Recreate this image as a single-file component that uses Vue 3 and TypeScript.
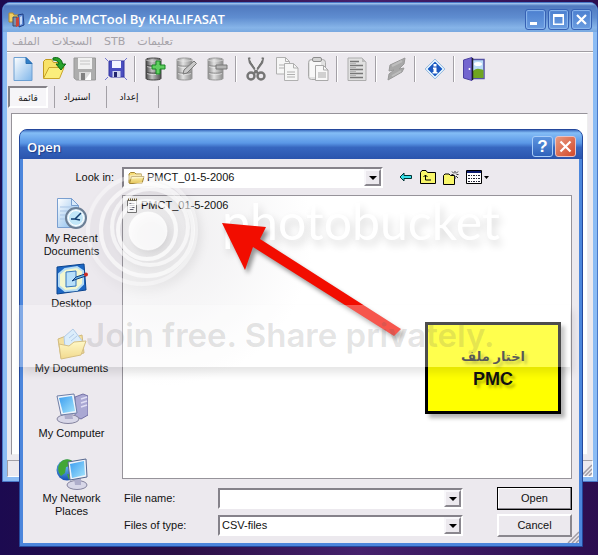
<script setup lang="ts">
import { ref } from 'vue'

const menus: string[] = ['الملف', 'السجلات', 'STB', 'تعليمات']
const tabs: string[] = ['قائمة', 'استيراد', 'إعداد']
const activeTab = ref(0)

const toolGroups: string[][] = [
  ['new', 'open', 'save', 'saveall'],
  ['dbadd', 'dbedit', 'dbremove'],
  ['cut', 'copy', 'paste'],
  ['list'],
  ['flash'],
  ['info'],
  ['exit'],
]

const places = [
  { id: 'recent', label: 'My Recent Documents' },
  { id: 'desktop', label: 'Desktop' },
  { id: 'documents', label: 'My Documents' },
  { id: 'computer', label: 'My Computer' },
  { id: 'network', label: 'My Network Places' },
]

const folder = ref('PMCT_01-5-2006')
const fileName = ref('')
const fileType = ref('CSV-files')
</script>

<template>
  <main class="screen">
    <svg width="0" height="0" class="defs" aria-hidden="true">
      <defs>
        <linearGradient id="g-page" x1="0" y1="0" x2="1" y2="1">
          <stop offset="0" stop-color="#ffffff" />
          <stop offset="1" stop-color="#7fb6ea" />
        </linearGradient>
        <linearGradient id="g-metal" x1="0" x2="1" y1="0" y2="0">
          <stop offset="0" stop-color="#8a8a8a" />
          <stop offset="0.4" stop-color="#e2e2e2" />
          <stop offset="1" stop-color="#8c8c8c" />
        </linearGradient>
        <linearGradient id="g-dark" x1="0" x2="1" y1="0" y2="0">
          <stop offset="0" stop-color="#444" />
          <stop offset="0.4" stop-color="#c4c4c4" />
          <stop offset="1" stop-color="#505050" />
        </linearGradient>
        <linearGradient id="g-screen" x1="0" y1="0" x2="1" y2="1">
          <stop offset="0" stop-color="#3a9df0" />
          <stop offset="1" stop-color="#a5e4fb" />
        </linearGradient>
        <linearGradient id="g-folder" x1="0" y1="0" x2="0" y2="1">
          <stop offset="0" stop-color="#fff6b0" />
          <stop offset="1" stop-color="#ecc95c" />
        </linearGradient>
        <radialGradient id="g-globe" cx="0.4" cy="0.3" r="0.8">
          <stop offset="0" stop-color="#6fc0f5" />
          <stop offset="1" stop-color="#0a3fa8" />
        </radialGradient>
      </defs>
    </svg>

    <section class="window app-window">
      <header class="app-title">
        <svg class="app-icon" viewBox="0 0 17 17" aria-hidden="true">
          <path d="M1 2h4l1 2h6v7H1z" fill="#f0cf62" stroke="#b08a30" />
          <path d="M5 6h4v9H5z" fill="#7d8da8" stroke="#36486c" />
          <path d="M10 4l5-1 1 11-5 2z" fill="#5f8bd6" stroke="#1f3f86" />
          <path d="M8 7l3-1v9l-3 1z" fill="#c8443a" />
          <path d="M12 6l2-1v8l-2 1z" fill="#c5d8f5" />
        </svg>
        <h1>Arabic PMCTool By KHALIFASAT</h1>
        <div class="caption-buttons">
          <button type="button" class="cap blue" aria-label="Minimize">
            <svg viewBox="0 0 19 19"><path d="M4 12h7v3H4z" fill="#fff" /></svg>
          </button>
          <button type="button" class="cap blue" aria-label="Maximize">
            <svg viewBox="0 0 19 19"><path d="M4 4h11v11H4zM5.500 7v6.500h8V7z" fill="#fff" fill-rule="evenodd" /></svg>
          </button>
          <button type="button" class="cap blue" aria-label="Close window">
            <svg viewBox="0 0 19 19"><path d="M5 5l9 9M14 5l-9 9" stroke="#fff" stroke-width="2.200" /></svg>
          </button>
        </div>
      </header>

      <div class="app-body">
        <nav class="menu">
          <button v-for="m in menus" :key="m" type="button" disabled>{{ m }}</button>
        </nav>

        <div class="toolbar" role="toolbar">
          <div v-for="(group, g) in toolGroups" :key="g" class="tool-group">
            <button v-for="t in group" :key="t" type="button" class="tool" :aria-label="t">
              <svg viewBox="0 0 24 24" aria-hidden="true">
                <g v-if="t === 'new'">
                  <path d="M3 .5h12l6 6v17H3z" fill="url(#g-page)" stroke="#6c9fd2" />
                  <path d="M15 .5v6h6z" fill="#2f7fc8" stroke="#2a6fb2" />
                </g>
                <g v-else-if="t === 'open'">
                  <path d="M1.500 21V4.500l2-2h6l2 3h6V11" fill="#f8e268" stroke="#c09a20" />
                  <path d="M1.500 21.500L7 10.500h15l-4.500 11z" fill="#fbee7c" stroke="#c9a42a" />
                  <path d="M11 1c5-1.500 9 1 9.500 6h3.200L19 13l-5-6h3C16.500 4 14 3 11 3z" fill="#27a32b" stroke="#0d6614" />
                </g>
                <g v-else-if="t === 'save'">
                  <path d="M1 1h21.500v22H3.500L1 21z" fill="#adadad" stroke="#999" />
                  <path d="M5 1h14v11H5z" fill="#f1f1f1" />
                  <path d="M7 4h10M7 7h10" stroke="#c4c4c4" />
                  <path d="M6 15h12v8H6z" fill="#dadada" />
                  <path d="M8 16h4v7H8z" fill="#808080" />
                  <path d="M12 23l6-8v8z" fill="#fff" />
                </g>
                <g v-else-if="t === 'saveall'">
                  <path d="M5 4h15v16H6.500L5 18.500z" fill="#4a4ec0" stroke="#3235a0" />
                  <path d="M8 4h9v7H8z" fill="#f3f5ff" />
                  <path d="M8.500 14h8v6h-8z" fill="#cfd4ef" />
                  <path d="M10 15h3v5h-3z" fill="#22246e" />
                  <path d="M1 1l3 3M23 1l-3 3M1 23l3-3M23 23l-3-3" stroke="#7377d0" />
                </g>
                <g v-else-if="t === 'dbadd' || t === 'dbedit' || t === 'dbremove'">
                  <path
                    d="M3 2.500c0-2 15-2 15 0v19c0 2-15 2-15 0z"
                    :fill="t === 'dbadd' ? 'url(#g-dark)' : 'url(#g-metal)'"
                    :stroke="t === 'dbadd' ? '#444' : '#999'"
                  />
                  <path d="M3 8c3 1.500 12 1.500 15 0M3 15c3 1.500 12 1.500 15 0" fill="none" :stroke="t === 'dbadd' ? '#444' : '#8c8c8c'" />
                  <path d="M3 3c3 1.500 12 1.500 15 0M4 9.500c3 1.500 10 1.500 13 0M4 16.500c3 1.500 10 1.500 13 0" fill="none" stroke="#eee" stroke-opacity=".6" />
                  <path v-if="t === 'dbadd'" d="M13 4h4v4h5v4h-5v5h-4v-5H9V8h4z" fill="#5fcf5f" stroke="#188524" />
                  <path v-else-if="t === 'dbedit'" d="M9 17l1-4 10-9 2.500 2.500L13 16z" fill="#c9c9c9" stroke="#777" />
                  <path v-else d="M11 8h11v4H11z" fill="#b5b5b5" stroke="#777" />
                </g>
                <g v-else-if="t === 'cut'" fill="none" stroke="#757575">
                  <path d="M5 .5l1 5 8 11M19 .5l-1 5-8 11" stroke-width="2.400" />
                  <path d="M6 2l7 11M18 2l-7 11" stroke="#eee" />
                  <ellipse cx="7" cy="19" rx="3.500" ry="3.500" stroke-width="2.400" />
                  <ellipse cx="17" cy="19" rx="3.500" ry="3.500" stroke-width="2.400" />
                </g>
                <g v-else-if="t === 'copy'" fill="#f6f6f6" stroke="#b0b0b0">
                  <path d="M1.500.5h9l4 4V17h-13z" />
                  <path d="M10.500.5v4h4M4 8h6M4 11h6" fill="none" />
                  <path d="M9.500 6.500h9l4.500 4.500v12.500H9.500z" />
                  <path d="M18.500 6.500V11H23M12 15h8M12 17.500h8M12 20h8" fill="none" />
                </g>
                <g v-else-if="t === 'paste'" stroke="#a9a9a9">
                  <rect x="2.500" y="2.500" width="17" height="20" rx="3" fill="#e2e2e2" />
                  <rect x="4" y="4" width="11" height="16" fill="#f8f8f8" stroke="none" />
                  <rect x="6.500" y=".5" width="9" height="4" rx="1.500" fill="#d4d4d4" stroke="#8d8d8d" />
                  <path d="M9.500 8.500h8l4.500 4.500v10.500H9.500z" fill="#f8f8f8" />
                  <path d="M17.500 8.500V13H22M12 16h8M12 18h8M12 20h8" fill="none" />
                </g>
                <g v-else-if="t === 'list'">
                  <path d="M3 1h14l4 4v18.500H3z" fill="#e1e1e1" stroke="#adadad" />
                  <path d="M17 1v4h4z" fill="#bbb" />
                  <path d="M5 4.500h9M5 8.500h13M5 12.500h13M5 16.500h13M5 20.500h13" stroke="#777" stroke-width="1.500" />
                  <path d="M5 6.500h6M5 10.500h6M5 14.500h6M5 18.500h6" stroke="#b5b5b5" />
                </g>
                <g v-else-if="t === 'flash'">
                  <path d="M6 8L21 1l-1 6-5 5 5-1-2 4L4 23l1-6 5-4-5 1z" fill="#a8a8a8" stroke="#999" />
                  <path d="M8 9l10-5M8 19l9-5" stroke="#bdbdbd" stroke-width="2" />
                </g>
                <g v-else-if="t === 'info'">
                  <path d="M12 2l10 10-10 10L2 12z" fill="#dcecfa" stroke="#9dbede" />
                  <path d="M12 5l7 7-7 7-7-7z" fill="#1d57bd" stroke="#2c6fd0" />
                  <path d="M10.500 7h3v2.500h-3zM10 10.500h3.500V15h1v1.500H9.500V15h1v-3H10z" fill="#fff" />
                </g>
                <g v-else>
                  <path d="M9 2.500h13v19H9z" fill="#b9dcf7" stroke="#5452a4" stroke-width="1.500" />
                  <path d="M10 15c4-5 8-3 11.500-2v8H10z" fill="#6fa51f" />
                  <ellipse cx="16" cy="7" rx="4" ry="2" fill="#fff" />
                  <path d="M1.500 3L10 .5v23L1.500 21z" fill="#7365cf" stroke="#4b40a0" />
                  <path d="M10.500 1v22" stroke="#1c1c2c" stroke-width="1.500" />
                  <circle cx="7.500" cy="12" r="1" fill="#fff" />
                </g>
              </svg>
            </button>
          </div>
        </div>

        <div class="tabs">
          <button
            v-for="(tab, i) in tabs"
            :key="tab"
            type="button"
            :class="{ active: i === activeTab }"
            @click="activeTab = i"
          ><span>{{ tab }}</span></button>
        </div>

        <div class="client"></div>
        <footer class="status">
          <svg class="grip" viewBox="0 0 12 12" aria-hidden="true"><path d="M1 12L12 1M5 12l7-7M9 12l3-3" stroke="#a09ca4" stroke-width="1.500" /></svg>
        </footer>
      </div>
    </section>

    <section class="window dialog" role="dialog" aria-labelledby="dialog-title">
      <header class="dialog-title">
        <h2 id="dialog-title">Open</h2>
        <div class="caption-buttons">
          <button type="button" class="cap help" aria-label="Help">?</button>
          <button type="button" class="cap red" aria-label="Close dialog">
            <svg viewBox="0 0 19 19"><path d="M4.500 4.500l10 10M14.500 4.500l-10 10" stroke="#fff" stroke-width="2.200" /></svg>
          </button>
        </div>
      </header>

      <form class="dialog-body" @submit.prevent>
        <label class="look-label" for="look-in">Look in:</label>
        <div class="look-row">
          <div class="combo look-combo">
            <svg class="folder" viewBox="0 0 16 14" aria-hidden="true">
              <path d="M.5 12V3L2 1.500h4L7.500 3H13v3" fill="#f7dd78" stroke="#a88a36" />
              <path d="M1 12.500L3 5.500h12.500l-2 7z" fill="url(#g-folder)" stroke="#a88a36" />
            </svg>
            <select id="look-in" v-model="folder"><option>PMCT_01-5-2006</option></select>
            <span class="drop"></span>
          </div>
          <div class="nav-tools">
            <button type="button" aria-label="Back">
              <svg width="14" height="14" viewBox="0 0 14 14"><path d="M1 7l4-4v2.500h7.500v3H5V11z" fill="#38e0e8" stroke="#033" /></svg>
            </button>
            <button type="button" aria-label="Up one level">
              <svg width="16" height="14" viewBox="0 0 16 14">
                <path d="M.5 13.500v-11l1.500-2h4l1.500 2h8v11z" fill="#f8f66a" stroke="#000" />
                <path d="M5.500 5v5H11M3.500 7l2-2 2 2" fill="none" stroke="#000" />
              </svg>
            </button>
            <button type="button" aria-label="Create new folder">
              <svg width="16" height="15" viewBox="0 0 16 15">
                <path d="M.5 14.500v-9L2 4h4l1.500 1.500h4v9z" fill="#f8f66a" stroke="#000" />
                <path d="M12 1v2M12 6v3M8.500 4.500h2M13.500 4.500h2M9 1.500l2 2M15 1.500l-2 2M13 6l2 2" stroke="#333" />
              </svg>
            </button>
            <button type="button" aria-label="View menu">
              <svg width="24" height="14" viewBox="0 0 24 14">
                <path d="M.5.500h15v13H.5z" fill="#fff" stroke="#000" />
                <path d="M1 1h14v2H1z" fill="#0a1a70" />
                <path d="M2 5.500h12M2 8.500h12M2 11.500h12" stroke="#223" stroke-dasharray="2 1 1 1" />
                <path d="M18 6h5l-2.500 3z" fill="#000" />
              </svg>
            </button>
          </div>
        </div>

        <nav class="places">
          <button v-for="p in places" :key="p.id" type="button">
            <svg viewBox="0 0 32 32" aria-hidden="true">
              <g v-if="p.id === 'recent'">
                <path d="M1.500.5h14l7 7v22h-21z" fill="url(#g-page)" stroke="#7a9fd0" />
                <path d="M15.500.5v7h7z" fill="#d8eafb" stroke="#7a9fd0" />
                <path d="M4 9h12M4 13h9M4 17h7M4 21h6" stroke="#a9c5e6" />
                <circle cx="20" cy="20" r="10" fill="#dbeef9" stroke="#6c7f96" stroke-width="2" />
                <circle cx="20" cy="20" r="7.500" fill="#c1e6f8" stroke="#fff" />
                <path d="M25 15l-6 6h-4M19 21l5 1" fill="none" stroke="#123f72" stroke-width="1.500" />
              </g>
              <g v-else-if="p.id === 'desktop'">
                <path d="M1 4l27-3 2 26-29 4z" fill="#1c67c4" stroke="#0b448e" />
                <path d="M9 6l12-2 6 4v13l-6 6-12 1-6-5V11z" fill="#f3f7cf" stroke="#b5dcf4" stroke-width="2" />
                <path d="M10 9l10-1v15l-10 1z" fill="#b8e0fa" stroke="#3374bd" />
                <path d="M16 18l4-4 9-3 1 2-9 3z" fill="#68b5e9" stroke="#123e7e" />
                <circle cx="30" cy="11.500" r="2" fill="#cf2b22" />
              </g>
              <g v-else-if="p.id === 'documents'">
                <path d="M2 11l8-3 3 3 13-4 2 18L5 30z" fill="#f0d377" stroke="#bf9c45" />
                <path d="M8 9l9-8 10 13-9 9-9-3z" fill="#cce5fa" stroke="#91b5dd" />
                <path d="M13 10l5-4M15 13l6-5" stroke="#8fb4df" />
                <path d="M3 16l10 2 5-4 12-1-5 14L5 31z" fill="url(#g-folder)" stroke="#c4a44f" />
              </g>
              <g v-else-if="p.id === 'computer'">
                <path d="M19 4l8-3 5 2v19l-7 4-6-3z" fill="#aaa8d3" stroke="#7471a6" />
                <path d="M25 6l6-2M25 10l6-2M25 14l6-2" stroke="#e0def4" stroke-width="1.500" />
                <ellipse cx="12" cy="26" rx="11" ry="4.500" fill="#d8d7e8" stroke="#85849f" />
                <path d="M8 20h8l1 6H9z" fill="#aeadca" />
                <path d="M1 3l17-2 3 19-16 2z" fill="#edf4fc" stroke="#6f7ea6" />
                <path d="M3 5l13-2 3 15-12 2z" fill="url(#g-screen)" />
              </g>
              <g v-else>
                <circle cx="11" cy="12" r="10.500" fill="url(#g-globe)" />
                <path d="M4 5c4-5 10-4 12-2l-2 5-4 1-1 6-4 3C2 14 1 9 4 5zM11 16l5 1-3 5z" fill="#42a736" />
                <ellipse cx="21" cy="27" rx="10" ry="4.500" fill="#d8d7e8" stroke="#85849f" />
                <path d="M18 20h7v7h-6z" fill="#aeadca" />
                <path d="M12 4l18-3 1 18-17 3z" fill="#eef3fa" stroke="#55668d" />
                <path d="M14 6l14-3 1 14-13 3z" fill="url(#g-screen)" />
              </g>
            </svg>
            <span>{{ p.label }}</span>
          </button>
        </nav>

        <ul class="files">
          <li>
            <svg viewBox="0 0 12 15" aria-hidden="true">
              <path d="M1.500 2.500h9v12h-9z" fill="#fff" stroke="#777" />
              <path d="M2 1.500h9" stroke="#6b5a2a" stroke-width="2" stroke-dasharray="1 1" />
              <path d="M3.500 5.500h5M3.500 7.500h5M3.500 9.500h5M3.500 11.500h4" stroke="#667" />
            </svg>
            <span>PMCT_01-5-2006</span>
          </li>
        </ul>

        <div class="fields">
          <label for="file-name">File name:</label>
          <div class="combo">
            <input id="file-name" v-model="fileName" type="text" />
            <button type="button" class="drop" aria-label="Recent names"></button>
          </div>
          <button type="submit" class="push default">Open</button>

          <label for="file-type">Files of type:</label>
          <div class="combo">
            <select id="file-type" v-model="fileType"><option>CSV-files</option></select>
            <span class="drop"></span>
          </div>
          <button type="button" class="push">Cancel</button>
        </div>
      </form>
      <svg class="grip" viewBox="0 0 12 12" aria-hidden="true"><path d="M1 12L12 1M5 12l7-7M9 12l3-3" stroke="#a09ca4" stroke-width="1.500" /></svg>
    </section>

    <span class="brand">photobucket</span>

    <svg class="arrow" width="200" height="130" viewBox="0 0 200 130" aria-hidden="true">
      <path d="M12 12l44 4-6 12 141 90-7 7L43 36l-8 23z" fill="#f20d00" />
    </svg>

    <aside class="note">
      <p dir="rtl">اختار ملف</p>
      <p>PMC</p>
    </aside>

    <div class="watermark">
      <svg class="rings" width="124" height="124" viewBox="0 0 124 124" fill="none" stroke="#fff" aria-hidden="true">
        <circle cx="62" cy="62" r="54" stroke-width="4" stroke-opacity=".4" />
        <circle cx="67" cy="62" r="46" stroke-width="4" stroke-opacity=".6" />
        <circle cx="70" cy="59" r="38" stroke-width="4" stroke-opacity=".6" />
        <circle cx="67" cy="62" r="29" stroke-width="4" stroke-opacity=".7" />
        <circle cx="68" cy="63" r="19" fill="#fff" fill-opacity=".8" stroke-opacity=".6" />
      </svg>
      <div class="band">Join free. Share privately.</div>
    </div>
  </main>
</template>

<style>
body {
  margin: 0;
  background: #2b0f4d;
}
</style>

<style scoped>
* {
  box-sizing: border-box;
}
.screen {
  position: relative;
  min-height: 100vh;
  overflow: hidden;
  font: 11px/13px "Liberation Sans", "DejaVu Sans", sans-serif;
  color: #111;
  background: linear-gradient(90deg, #1c0a50, #2b0f45 30%, #45206c 60%, #2c0e50);
}
.defs {
  position: absolute;
}
button,
input,
select {
  margin: 0;
  padding: 0;
  border: 0;
  border-radius: 0;
  background: none;
  font: inherit;
  color: inherit;
}
h1,
h2,
p,
ul {
  margin: 0;
  padding: 0;
  list-style: none;
}
svg {
  display: block;
}
.window {
  position: absolute;
  display: flex;
  flex-direction: column;
}

/* main window */
.app-window {
  inset: 2px 0 73px 2px;
  padding: 0 4px 4px;
  border: 1px solid #4a78c8;
  border-radius: 8px 8px 0 0;
  background: #8cbcf4;
}
.app-title {
  display: flex;
  align-items: center;
  gap: 3px;
  height: 29px;
  margin: 0 -4px;
  padding: 3px 5px 0;
  border-radius: 7px 7px 0 0;
  background: linear-gradient(#a9cdf3, #5079bf 10%, #5f8dd0 50%, #86b4e8 85%, #78a8e0);
}
.app-icon {
  width: 17px;
  height: 17px;
}
h1,
h2 {
  flex: 1;
  font: 600 13px/18px "Open Sans", "Noto Sans", sans-serif;
  color: #fff;
  white-space: nowrap;
}
.caption-buttons {
  display: flex;
  gap: 2px;
}
.cap {
  width: 21px;
  height: 21px;
  border: 1px solid #3661b4;
  border-radius: 3px;
  box-shadow: inset 0 0 1px 1px #8db8ee;
  background: linear-gradient(#4b7fcf, #6a9ce0);
  color: #fff;
}
.help {
  border-color: #a8cdf8;
  background: linear-gradient(#5d95e0, #2f62bb);
  font: bold 17px/18px "Liberation Sans", sans-serif;
  box-shadow: none;
}
.red {
  border-color: #e8c2c4;
  background: linear-gradient(135deg, #e99a80, #d2492a);
  box-shadow: none;
}
.app-body {
  flex: 1;
  display: flex;
  flex-direction: column;
  background: #ece9ee;
}
.menu {
  display: flex;
  align-items: center;
  gap: 12px;
  height: 20px;
  padding-left: 5px;
  border-bottom: 1px solid #a09da2;
  font: 11px/18px "DejaVu Sans", sans-serif;
  color: #a5a2a8;
}
.toolbar {
  display: flex;
  height: 33px;
  border-top: 1px solid #fff;
}
.tool-group {
  display: flex;
  align-items: center;
}
.tool-group + .tool-group::before {
  content: "";
  height: 26px;
  margin: 0 3px;
  border-left: 1px solid #a3a0a6;
  border-right: 1px solid #fff;
}
.tool {
  display: grid;
  place-items: center;
  width: 31px;
  height: 30px;
}
.tool svg {
  width: 24px;
  height: 24px;
}
.tabs {
  display: flex;
  gap: 5px;
  padding: 1px 0 0 1px;
}
.tabs button {
  width: 47px;
  height: 22px;
  padding-right: 12px;
  border-right: 1px solid #a3a0a6;
  font: 9px/20px "DejaVu Sans", sans-serif;
}
.tabs button span {
  display: block;
}
.tabs button.active {
  padding-right: 6px;
}
.tabs .active span {
  height: 22px;
  border: 2px solid #fff;
  border-top-color: #858288;
  border-left-color: #858288;
  background: #f6f5f8;
}
.client {
  flex: 1;
  margin: 5px 5px 5px 4px;
  border: 1px solid #96939a;
  border-right-color: #eee;
  border-bottom-color: #eee;
  background: #fff;
}
.status {
  display: flex;
  justify-content: flex-end;
  align-items: flex-end;
  height: 17px;
  border: 1px solid #a3a0a6;
  border-right-color: #fff;
  border-bottom-color: #fff;
}
.grip {
  width: 12px;
  height: 12px;
}

/* file dialog */
.dialog {
  inset: 129px 15px 8px 19px;
  padding: 0 3px 3px;
  border: 1px solid #24489c;
  border-radius: 8px 8px 0 0;
  background: #4c86dc;
}
.dialog-title {
  display: flex;
  align-items: center;
  height: 29px;
  margin: 0 -3px;
  padding: 4px 6px 0 7px;
  border-radius: 7px 7px 0 0;
  background: linear-gradient(#3f6fc0, #84bdf6 10%, #5a97e6 45%, #3767c0 60%, #2a54ad);
}
.dialog-title h2 {
  text-shadow: 1px 1px 1px #1c3c86;
}
.dialog-body {
  flex: 1;
  display: grid;
  grid-template-columns: 91px 1fr;
  grid-template-rows: 20px 1fr auto;
  gap: 8px;
  padding: 8px 7px 6px 0;
  background: #ece9ee;
}
.look-label {
  align-self: center;
  text-align: right;
}
.look-row {
  display: flex;
  gap: 16px;
}
.combo {
  display: flex;
  align-items: stretch;
  height: 21px;
  border: 2px solid #fff;
  border-top-color: #85828a;
  border-left-color: #85828a;
  background: #fff;
}
.combo input,
.combo select {
  flex: 1;
  min-width: 0;
  padding-left: 2px;
  appearance: none;
  outline: none;
}
.drop {
  display: grid;
  place-items: center;
  width: 17px;
  border: 2px solid #8a878e;
  border-top-color: #f8f7fa;
  border-left-color: #f8f7fa;
  background: #ece9ee;
}
.drop::after {
  content: "";
  border: 4px solid transparent;
  border-top-color: #000;
  border-bottom: 0;
}
.look-combo {
  width: 261px;
  padding-left: 4px;
}
.look-combo .drop,
.look-combo {
  flex: none;
}
.folder {
  width: 17px;
  height: 14px;
  align-self: center;
}
.nav-tools {
  display: flex;
  align-items: center;
  gap: 7px;
}
.places {
  display: flex;
  flex-direction: column;
  grid-row: 2 / 4;
}
.places button {
  display: flex;
  flex-direction: column;
  align-items: center;
  gap: 2px;
  height: 65px;
  padding: 3px 0 0 6px;
  text-align: center;
}
.places svg {
  width: 32px;
  height: 32px;
}
.places span {
  width: 76px;
}
.files {
  padding: 2px 3px;
  border: 1px solid #96939a;
  background: radial-gradient(circle at 40px 40px, #eeedef, #fff 150px);
}
.files li {
  display: flex;
  align-items: center;
  gap: 3px;
}
.files svg {
  width: 12px;
  height: 15px;
}
.fields {
  display: grid;
  grid-template-columns: 96px 1fr 75px;
  align-items: center;
  row-gap: 4px;
}
.fields label {
  padding-left: 2px;
}
.fields .combo {
  margin-right: 34px;
}
.push {
  height: 23px;
  border: 2px solid #8a878e;
  border-top-color: #fff;
  border-left-color: #fff;
}
.default {
  border: 1px solid #000;
  box-shadow: inset -1px -1px #8a878e, inset 1px 1px #fff;
}
.dialog > .grip {
  position: absolute;
  right: 3px;
  bottom: 3px;
}

/* annotations over the windows */
.arrow {
  position: absolute;
  left: 210px;
  top: 211px;
  filter: drop-shadow(3px 4px 2px rgba(0, 0, 0, 0.4));
}
.note {
  position: absolute;
  left: 425px;
  top: 322px;
  width: 136px;
  height: 92px;
  padding-top: 20px;
  border: 3px solid #000;
  background: #ff0;
  box-shadow: 4px 4px 4px rgba(0, 0, 0, 0.3);
  font: bold 18px/23px "Liberation Sans", "DejaVu Sans", sans-serif;
  text-align: center;
  text-shadow: 3px 3px 3px rgba(0, 0, 0, 0.3);
}
.note p:first-child {
  font-size: 13px;
}
.watermark {
  position: absolute;
  inset: 0;
  pointer-events: none;
}
.rings {
  position: absolute;
  left: 80px;
  top: 168px;
  filter: drop-shadow(3px 5px 5px rgba(0, 0, 0, 0.14));
}
.brand {
  position: absolute;
  left: 222px;
  top: 191px;
  font: 50px/60px Lato, sans-serif;
  color: #fff;
  text-shadow: 3px 5px 8px rgba(0, 0, 0, 0.16);
  pointer-events: none;
}
.band {
  position: absolute;
  left: 19px;
  right: 28px;
  top: 305px;
  height: 62px;
  padding-left: 67px;
  background: rgba(255, 255, 255, 0.3);
  box-shadow: 3px 6px 8px rgba(0, 0, 0, 0.1);
  font: 600 33px/60px Inter, sans-serif;
  color: rgba(90, 90, 90, 0.17);
  white-space: nowrap;
}
</style>
